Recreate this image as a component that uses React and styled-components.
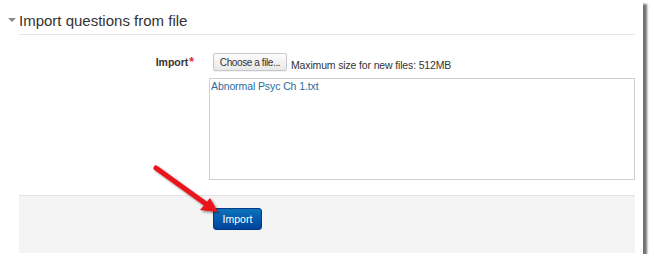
import React from 'react';
import styled, { createGlobalStyle } from 'styled-components';

const Global = createGlobalStyle`
  html, body { margin: 0; padding: 0; background: #fff; }
  body { font-family: "Liberation Sans", Arial, sans-serif; color: #333; }
`;

const Frame = styled.div`
  position: relative;
  width: 643px;
  height: 254px;
  background: #fff;
  box-shadow: 4px 4px 2px rgba(0, 0, 0, 0.55);
`;

const Fieldset = styled.div`
  padding: 0 8px 0 19px;
`;

const Legend = styled.div`
  position: relative;
  display: flex;
  align-items: flex-end;
  box-sizing: border-box;
  height: 35px;
  width: 616px;
  padding-bottom: 5px;
  border-bottom: 1px solid #e5e5e5;
  font-size: 15px;
  line-height: 17px;
  color: #333;
`;

const Caret = styled.span`
  position: absolute;
  left: -11px;
  top: 18px;
  width: 0;
  height: 0;
  border-left: 4px solid transparent;
  border-right: 4px solid transparent;
  border-top: 4px solid #8a8a8a;
`;

const Row = styled.div`
  display: grid;
  grid-template-columns: 194px 1fr;
  margin-top: 18px;
`;

const Label = styled.div`
  font-size: 10.5px;
  font-weight: bold;
  color: #3b3330;
  padding-right: 19px;
  text-align: right;
  line-height: 12px;
  padding-top: 3px;
`;

const Required = styled.span`
  color: #e0262a;
  font-size: 12px;
  font-weight: bold;
  margin-left: 1px;
`;

const Controls = styled.div`
  display: flex;
  flex-direction: column;
`;

const PickerLine = styled.div`
  display: flex;
  align-items: flex-end;
  gap: 4px;
  height: 18px;
`;

const FileButton = styled.div`
  box-sizing: border-box;
  width: 74px;
  height: 18px;
  border: 1px solid #c8c8c8;
  border-radius: 2px;
  background: linear-gradient(#fdfdfd, #e8e8e8);
  font-size: 10px;
  letter-spacing: -0.4px;
  color: #333;
  display: flex;
  align-items: center;
  justify-content: center;
  box-shadow: 0 1px 1px rgba(0, 0, 0, 0.06);
`;

const Hint = styled.span`
  font-size: 10.5px;
  letter-spacing: -0.15px;
  line-height: 12px;
  color: #333;
`;

const FileBox = styled.div`
  box-sizing: border-box;
  margin: 7px 0 0 -4px;
  width: 426px;
  height: 102px;
  border: 1px solid #cfcfcf;
  padding: 1px 0 0 1px;
  font-size: 10.5px;
  letter-spacing: -0.1px;
  line-height: 12px;
  color: #2d6a9b;
`;

const Footer = styled.div`
  margin: 15px 0 0 19px;
  width: 616px;
  height: 58px;
  box-sizing: border-box;
  background: #f4f4f4;
  border-top: 1px solid #e3e3e3;
  display: grid;
  grid-template-columns: 194px 1fr;
  align-items: start;
  padding-top: 12px;
`;

const PrimaryButton = styled.div`
  grid-column: 2;
  box-sizing: border-box;
  width: 49px;
  height: 22px;
  border-radius: 3px;
  background: linear-gradient(#0b73bb, #00429c);
  border: 1px solid #003b8a;
  color: #fff;
  font-size: 10.5px;
  display: flex;
  align-items: center;
  justify-content: center;
`;

const Arrow = styled.svg`
  position: absolute;
  left: 148px;
  top: 160px;
  overflow: visible;
`;

export default function App() {
  return (
    <>
      <Global />
      <Frame>
        <Fieldset>
          <Legend><Caret />Import questions from file</Legend>
          <Row>
            <Label>Import<Required>*</Required></Label>
            <Controls>
              <PickerLine>
                <FileButton>Choose a file...</FileButton>
                <Hint>Maximum size for new files: 512MB</Hint>
              </PickerLine>
              <FileBox>Abnormal Psyc Ch 1.txt</FileBox>
            </Controls>
          </Row>
        </Fieldset>
        <Footer>
          <PrimaryButton>Import</PrimaryButton>
        </Footer>
        <Arrow width="80" height="60" viewBox="0 0 80 60">
          <defs>
            <filter id="sh" x="-20%" y="-20%" width="150%" height="150%">
              <feDropShadow dx="1.5" dy="1.5" stdDeviation="1" floodColor="#000" floodOpacity="0.45" />
            </filter>
          </defs>
          <g filter="url(#sh)">
            <line x1="8" y1="8" x2="58" y2="44" stroke="#e8141b" strokeWidth="5" strokeLinecap="round" />
            <polygon points="70,52 52,50 62,38" fill="#e8141b" />
          </g>
        </Arrow>
      </Frame>
    </>
  );
}
